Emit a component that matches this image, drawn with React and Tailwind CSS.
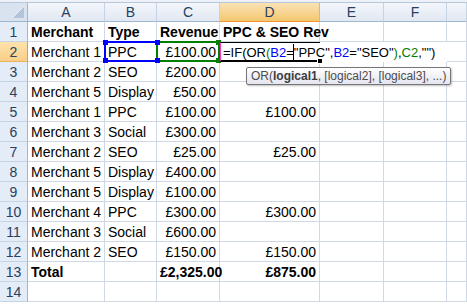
import React from 'react';

const rows = [
  { n: 1, a: 'Merchant', b: 'Type', c: 'Revenue', d: 'PPC & SEO Rev', bold: true, head: true },
  { n: 2, a: 'Merchant 1', b: 'PPC', c: '£100.00', edit: true },
  { n: 3, a: 'Merchant 2', b: 'SEO', c: '£200.00' },
  { n: 4, a: 'Merchant 5', b: 'Display', c: '£50.00' },
  { n: 5, a: 'Merchant 1', b: 'PPC', c: '£100.00', d: '£100.00' },
  { n: 6, a: 'Merchant 3', b: 'Social', c: '£300.00' },
  { n: 7, a: 'Merchant 2', b: 'SEO', c: '£25.00', d: '£25.00' },
  { n: 8, a: 'Merchant 5', b: 'Display', c: '£400.00' },
  { n: 9, a: 'Merchant 5', b: 'Display', c: '£100.00' },
  { n: 10, a: 'Merchant 4', b: 'PPC', c: '£300.00', d: '£300.00' },
  { n: 11, a: 'Merchant 3', b: 'Social', c: '£600.00' },
  { n: 12, a: 'Merchant 2', b: 'SEO', c: '£150.00', d: '£150.00' },
  { n: 13, a: 'Total', b: '', c: '£2,325.00', d: '£875.00', bold: true },
  { n: 14, a: '', b: '', c: '', d: '' },
];

const letters = ['A', 'B', 'C', 'D', 'E', 'F', ''];

const cell = 'h-5 border-r border-b border-[#d0d7e5] px-[3px] text-[14px] leading-[20px] whitespace-nowrap text-black';

function ColHead({ l }) {
  const sel = l === 'D';
  return (
    <div
      className={
        'h-[19px] border-r border-b text-center text-[14px] leading-[19px] text-[#27415f] ' +
        (sel
          ? 'bg-gradient-to-b from-[#fbe3b5] to-[#f3c76e] border-r-[#f1b44f] border-b-[#f29436]'
          : 'bg-gradient-to-b from-[#f3f6fb] to-[#e1e8f2] border-r-[#c5d3e2] border-b-[#9eb6ce]')
      }
    >
      {l}
    </div>
  );
}

function RowHead({ n }) {
  const sel = n === 2;
  return (
    <div
      className={
        'h-5 border-r border-b text-center text-[14px] leading-[20px] text-[#27415f] ' +
        (sel
          ? 'bg-gradient-to-b from-[#fde2ad] to-[#f9cf87] border-r-[#f29436] border-b-[#e9b45e]'
          : 'bg-[#e4ecf7] border-r-[#9eb6ce] border-b-[#c5d3e2]')
      }
    >
      {n}
    </div>
  );
}

// small square handle on a range-finder corner
function Handle({ pos, color }) {
  return <span className={'absolute w-[5px] h-[5px] ' + pos + ' ' + color} />;
}

function Formula() {
  return (
    <span>
      =IF(OR<span className="text-[#008000]">(</span>
      <span className="text-[#0000ff]">B2</span>="PPC",
      <span className="text-[#0000ff]">B2</span>="SEO"
      <span className="text-[#008000]">)</span>,<span className="text-[#008000]">C2</span>,"")
    </span>
  );
}

export default function App() {
  return (
    <div
      className="relative w-[467px] h-[304px] overflow-hidden bg-white"
      style={{ fontFamily: '"Liberation Sans", Arial, sans-serif' }}
    >
      <div className="h-[3px] bg-[#eef2f8] border-b border-[#b7c7da]" />
      <div className="grid grid-cols-[28px_77px_52px_63px_100px_64px_63px_1fr]">
        {/* corner */}
        <div className="h-[19px] flex items-end justify-end p-[3px] bg-[#d9e2ef] border-r border-b border-[#9eb6ce]">
          <svg width="12" height="12" viewBox="0 0 12 12">
            <polygon points="12,0 12,12 0,12" fill="#b4c5da" />
            <polyline points="12,0 0,12" stroke="#f4f7fb" strokeWidth="1" fill="none" />
          </svg>
        </div>
        {letters.map((l, i) => (
          <ColHead key={i} l={l} />
        ))}

        {rows.map((r) => (
          <React.Fragment key={r.n}>
            <RowHead n={r.n} />
            <div className={cell + (r.bold ? ' font-bold' : '')}>{r.a}</div>
            {r.edit ? (
              <>
                <div className="relative h-5 border-r border-b border-[#d0d7e5] px-[3px] text-[14px] leading-[20px] whitespace-nowrap">
                  {r.b}
                  <div className="absolute -left-[1px] -top-[1px] w-[54px] h-[21px] border-2 border-[#0000ff]">
                    <Handle pos="-left-[3px] -top-[3px]" color="bg-[#0000ff]" />
                    <Handle pos="-left-[3px] -bottom-[3px]" color="bg-[#0000ff]" />
                  </div>
                </div>
                <div className="relative h-5 border-r border-b border-[#d0d7e5] px-[3px] text-right text-[14px] leading-[20px] whitespace-nowrap">
                  {r.c}
                  <div className="absolute -left-[1px] -top-[1px] w-[64px] h-[21px] border-2 border-[#008000]">
                    <Handle pos="-left-[3px] -top-[3px]" color="bg-[#0000ff]" />
                    <Handle pos="-left-[3px] -bottom-[3px]" color="bg-[#0000ff]" />
                    <Handle pos="-right-[3px] -top-[3px]" color="bg-[#008000]" />
                    <Handle pos="-right-[3px] -bottom-[3px]" color="bg-[#008000]" />
                  </div>
                </div>
                <div className="col-span-3 flex h-5 bg-white text-[13px] leading-[20px] whitespace-nowrap text-black">
                  <div className="relative w-[100px] shrink-0 border-l border-l-[#ff33cc] border-t border-t-black border-b-2 border-b-black pl-[2px] overflow-visible">
                    <Formula />
                    <span className="absolute left-[72px] top-[1px] w-px h-[18px] bg-black" />
                    <span className="absolute -right-[3px] -bottom-[4px] w-[6px] h-[6px] bg-black border border-white" />
                  </div>
                </div>
              </>
            ) : (
              <>
                <div className={cell + (r.head ? ' font-bold' : '')}>{r.b}</div>
                <div className={cell + (r.head ? ' text-left' : ' text-right') + (r.bold ? ' font-bold' : '')}>
                  {r.c}
                </div>
                <div className={cell + (r.head ? ' text-left overflow-visible' : ' text-right') + (r.bold ? ' font-bold' : '')}>
                  {r.d}
                </div>
                <div className={cell} />
                <div className={cell} />
              </>
            )}
            <div className={cell} />
          </React.Fragment>
        ))}
      </div>

      {/* function tooltip */}
      <div className="absolute left-[246px] top-[67px] w-[205px] h-[18px] rounded-[2px] border border-[#767676] bg-gradient-to-b from-white to-[#e4e5f0] shadow-[1px_1px_2px_rgba(0,0,0,0.25)] pl-[4px] text-[12px] leading-[16px] text-[#4c4c4c] whitespace-nowrap">
        OR(<b className="text-[#3c3c3c]">logical1</b>, [logical2], [logical3], ...)
      </div>
    </div>
  );
}
